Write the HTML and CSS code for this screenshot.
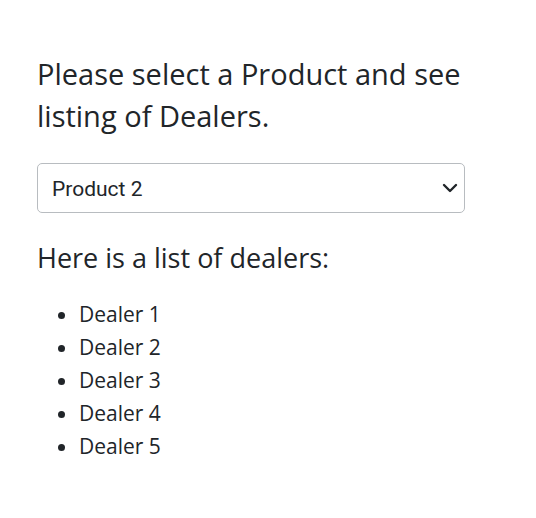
FILE: index.html
```html
<!DOCTYPE html>
<html>
<head>
<meta charset="utf-8">
<link rel="stylesheet" href="styles.css">
</head>
<body>
<main class="page">
  <h1 class="title">Please select a Product and see listing of Dealers.</h1>
  <div class="select-wrap">
    <select class="product-select">
      <option>Product 1</option>
      <option selected>Product 2</option>
      <option>Product 3</option>
    </select>
    <svg class="chevron" viewBox="0 0 16 16" width="16" height="16" aria-hidden="true">
      <path d="M2 5l6 6 6-6" fill="none" stroke="#212529" stroke-width="2.4" stroke-linecap="round" stroke-linejoin="round"/>
    </svg>
  </div>
  <h2 class="subtitle">Here is a list of dealers:</h2>
  <ul class="dealers">
    <li>Dealer 1</li>
    <li>Dealer 2</li>
    <li>Dealer 3</li>
    <li>Dealer 4</li>
    <li>Dealer 5</li>
  </ul>
</main>
</body>
</html>
```

FILE: styles.css
```css
html, body {
  margin: 0;
  padding: 0;
  background: #ffffff;
}

body {
  font-family: "Open Sans", "Liberation Sans", sans-serif;
  color: #212529;
}

.page {
  width: 428px;
  padding: 53px 37px 40px;
}

.title {
  margin: 0 0 26px;
  font-size: 29px;
  line-height: 42px;
  font-weight: 400;
}

.select-wrap {
  position: relative;
  width: 428px;
}

.product-select {
  display: block;
  width: 428px;
  height: 50px;
  box-sizing: border-box;
  margin: 0;
  padding: 2px 40px 0 14px;
  border: 1px solid #b8bcc0;
  border-radius: 5px;
  background: #ffffff;
  color: #212529;
  font-family: Roboto, "Liberation Sans", sans-serif;
  font-size: 21px;
  -webkit-appearance: none;
  appearance: none;
}

.chevron {
  position: absolute;
  right: 7px;
  top: 17px;
  pointer-events: none;
}

.subtitle {
  margin: 24px 0 19px;
  font-size: 27px;
  line-height: 42px;
  font-weight: 400;
}

.dealers {
  margin: 0;
  padding-left: 42px;
  font-size: 21px;
  line-height: 33px;
}
```
